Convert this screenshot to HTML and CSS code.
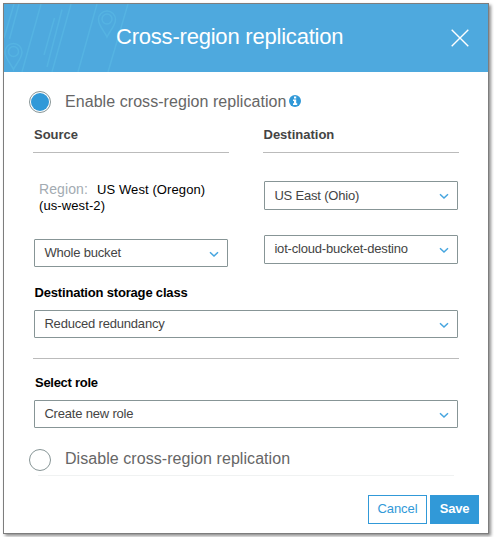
FILE: index.html
```html
<!DOCTYPE html>
<html lang="en">
<head>
<meta charset="utf-8">
<title>Cross-region replication</title>
<link rel="stylesheet" href="styles.css">
</head>
<body>
<div class="dialog">
  <header class="header">
    <svg class="pattern" width="130" height="68" viewBox="4 4 130 68" fill="none" stroke="#55b3e2" stroke-width="1.5">
      <path d="M14 4 4 38M19 4 9.5 39M41 4 22 72M71 4 52 72M97 4 78 72M128 4 108 72M54.500 18 44 55M62 9.500 47 67"/>
      <circle cx="107" cy="19" r="5"/>
      <path d="M107 37C105 32 98.500 26 98.500 19.500a8.500 8.500 0 0 1 17 0C115.500 26 109 32 107 37Z"/>
      <circle cx="13.500" cy="51.500" r="5"/>
      <path d="M13.500 69.500C11.500 64.500 5 58.500 5 52a8.500 8.500 0 0 1 17 0C22 58.500 15.500 64.500 13.500 69.500Z"/>
    </svg>
    <h1 class="title">Cross-region replication</h1>
    <svg class="close" width="18" height="18" viewBox="0 0 18 18" stroke="#fff" stroke-width="1.4"><path d="M.7.7 17.300 17.300M17.300.7.7 17.300"/></svg>
  </header>
  <main class="body">
    <div class="option">
      <span class="radio checked"></span>
      <span class="option-label enable">Enable cross-region replication</span>
      <svg class="info" width="12" height="12" viewBox="0 0 12 12"><circle cx="6" cy="6" r="6" fill="#3199d8"/><path fill="#fff" d="M5 1.500h2.200v2H5zM4 4.500h3.200v3.800h1v1.700H4V8.300h1V6H4z"/></svg>
    </div>
    <div class="columns">
      <section>
        <h2 class="column-title">Source</h2>
        <p class="region"><span class="region-key">Region:</span>US West (Oregon)<br>(us-west-2)</p>
        <div class="select"><span>Whole bucket</span><svg class="chevron" width="10" height="7" viewBox="0 0 10 7"><path d="M1 1.300 5 5l4-3.700"/></svg></div>
      </section>
      <section>
        <h2 class="column-title destination">Destination</h2>
        <div class="select tall first"><span>US East (Ohio)</span><svg class="chevron" width="10" height="7" viewBox="0 0 10 7"><path d="M1 1.300 5 5l4-3.700"/></svg></div>
        <div class="select tall second"><span>iot-cloud-bucket-destino</span><svg class="chevron" width="10" height="7" viewBox="0 0 10 7"><path d="M1 1.300 5 5l4-3.700"/></svg></div>
      </section>
    </div>
    <h3 class="field-title">Destination storage class</h3>
    <div class="select"><span>Reduced redundancy</span><svg class="chevron" width="10" height="7" viewBox="0 0 10 7"><path d="M1 1.300 5 5l4-3.700"/></svg></div>
    <hr class="divider">
    <h3 class="field-title role">Select role</h3>
    <div class="select"><span>Create new role</span><svg class="chevron" width="10" height="7" viewBox="0 0 10 7"><path d="M1 1.300 5 5l4-3.700"/></svg></div>
    <div class="option last">
      <span class="radio"></span>
      <span class="option-label">Disable cross-region replication</span>
    </div>
    <hr class="faint">
  </main>
  <footer class="footer">
    <button class="button">Cancel</button>
    <button class="button primary">Save</button>
  </footer>
</div>
</body>
</html>
```

FILE: styles.css
```css
* {
  box-sizing: border-box;
}

body {
  margin: 0;
  padding: 3px;
  background: #fff;
  font: 13px/16px "Liberation Sans", Arial, sans-serif;
  color: #444;
}

h1, h2, h3, p {
  margin: 0;
}

.dialog {
  width: 486px;
  height: 531px;
  border: 1px solid #7d7d7d;
  background: #fff;
  box-shadow: 2px 2px 3px rgba(0, 0, 0, .45);
}

.header {
  position: relative;
  display: flex;
  align-items: center;
  justify-content: space-between;
  height: 68px;
  padding: 0 19px 0 112px;
  background: #4ea9de;
}

.pattern {
  position: absolute;
  top: 0;
  left: 0;
}

.title {
  position: relative;
  padding-bottom: 2px;
  font-size: 22px;
  font-weight: 400;
  line-height: 26px;
  letter-spacing: -.21px;
  color: #fff;
  white-space: nowrap;
}

.body {
  padding: 18px 30px 0;
}

.option {
  display: flex;
  align-items: center;
  height: 24px;
  margin-left: -5px;
}

.radio {
  width: 22px;
  height: 22px;
  margin-right: 14px;
  border: 1px solid #879596;
  border-radius: 50%;
}

.checked {
  padding: 1px;
  background: #3199d8 content-box;
}

.option-label {
  padding-bottom: 2px;
  font-size: 16px;
  line-height: 20px;
  letter-spacing: .06px;
  color: #666;
}

.enable {
  padding-bottom: 0;
}

.info {
  margin: -3px 0 0 2px;
}

.columns {
  display: grid;
  grid-template-columns: 194px 194px;
  justify-content: space-between;
  height: 153px;
}

.column-title {
  height: 39px;
  margin: 0 -1px;
  padding: 13px 1px 0;
  border-bottom: 1px solid #bbb;
  font-size: 13px;
  font-weight: 700;
}

.destination {
  padding-left: .5px;
}

.region {
  height: 86px;
  padding: 28px 0 0 5px;
  letter-spacing: .1px;
  color: #000;
}

.region-key {
  margin-right: 9px;
  font-size: 14px;
  color: #a3abb2;
}

.select {
  display: flex;
  align-items: center;
  justify-content: space-between;
  height: 28px;
  padding: 0 8px 1px 9.4px;
  border: 1px solid #879596;
  border-radius: 1px;
  letter-spacing: -.19px;
}

.tall {
  height: 29px;
}

.first {
  margin-top: 28px;
}

.first span {
  padding-top: 2px;
}

.second {
  margin-top: 25px;
}

.chevron {
  margin-top: 3px;
  fill: none;
  stroke: #45a5df;
  stroke-width: 1.5;
}

.field-title {
  height: 43px;
  padding: 18px 0 0 .5px;
  font-size: 13px;
  font-weight: 700;
  letter-spacing: -.18px;
  color: #000;
}

.divider {
  height: 1px;
  margin: 20px -1px 0;
  border: 0;
  background: #bbb;
}

.role {
  height: 41px;
  padding: 16px 0 0 1px;
  letter-spacing: -.28px;
}

.last {
  margin-top: 20px;
}

.faint {
  height: 1px;
  margin: 3px 4px 0;
  border: 0;
  background: #f0f2f2;
}

.footer {
  display: flex;
  justify-content: flex-end;
  gap: 3px;
  margin-top: 19px;
  padding-right: 9px;
}

.button {
  width: 59px;
  height: 29px;
  padding: 0 0 2px;
  border: 1px solid #3199d8;
  background: #fff;
  font: 13px/16px "Liberation Sans", Arial, sans-serif;
  letter-spacing: -.1px;
  color: #3199d8;
}

.primary {
  width: 49px;
  background: #3199d8;
  font-weight: 700;
  letter-spacing: -.2px;
  color: #fff;
}
```
